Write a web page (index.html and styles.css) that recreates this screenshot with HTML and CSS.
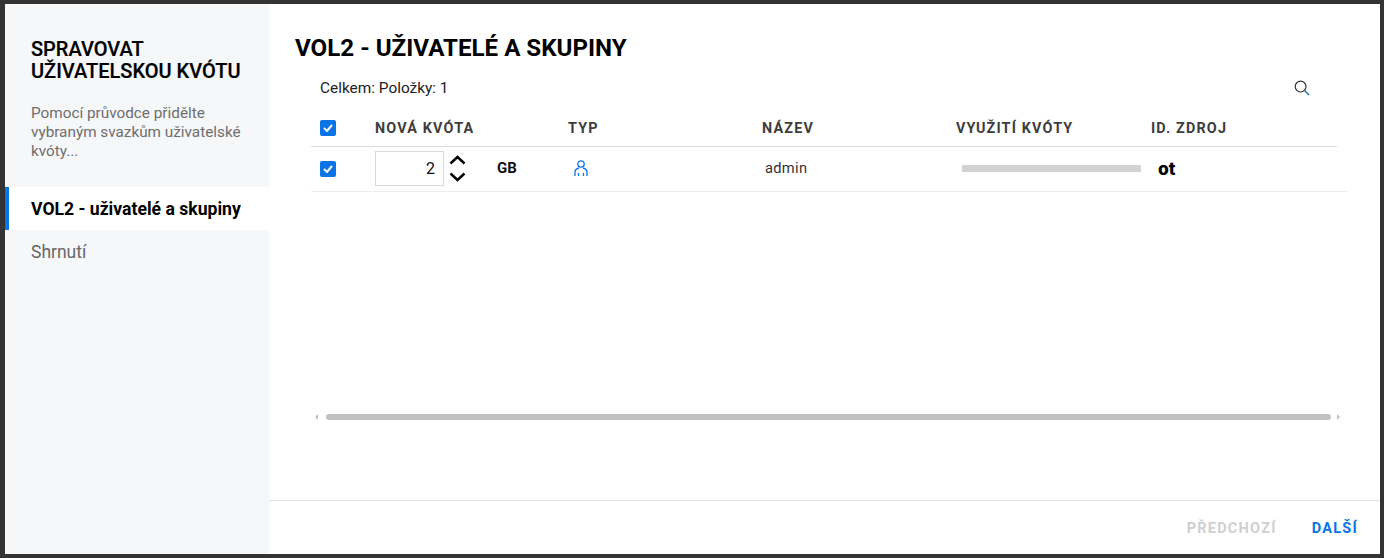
FILE: index.html
```html
<!DOCTYPE html>
<html lang="cs">
<head>
<meta charset="utf-8">
<title>Spravovat uživatelskou kvótu</title>
<link rel="stylesheet" href="styles.css">
</head>
<body>
<div class="modal">
  <aside class="side">
    <div class="side-head">
      <h2 class="side-title">SPRAVOVAT UŽIVATELSKOU KVÓTU</h2>
      <p class="side-desc">Pomocí průvodce přidělte vybraným svazkům uživatelské kvóty...</p>
    </div>
    <div class="step step-active">VOL2 - uživatelé a skupiny</div>
    <div class="step">Shrnutí</div>
  </aside>
  <main class="main">
    <div class="content">
      <h1 class="title">VOL2 - UŽIVATELÉ A SKUPINY</h1>
      <div class="toolbar">
        <span>Celkem: Položky: 1</span>
        <svg class="search" width="16" height="16" viewBox="0 0 16 16" fill="none" stroke="#333" stroke-width="1.2"><circle cx="6.6" cy="6.6" r="5.4"/><path d="M10.6 10.6 15 15" stroke="#1f6fb5" stroke-width="1.4"/></svg>
      </div>
      <div class="grid head">
        <div class="c-check"><span class="check"><svg width="10" height="8" viewBox="0 0 10 8" fill="none" stroke="#fff" stroke-width="2"><path d="M1 4l3 3 5-6"/></svg></span></div>
        <div class="th">NOVÁ KVÓTA</div>
        <div class="th">TYP</div>
        <div class="th">NÁZEV</div>
        <div class="th">VYUŽITÍ KVÓTY</div>
        <div class="th">ID. ZDROJ</div>
      </div>
      <div class="grid row">
        <div class="c-check row-check"><span class="check"><svg width="10" height="8" viewBox="0 0 10 8" fill="none" stroke="#fff" stroke-width="2"><path d="M1 4l3 3 5-6"/></svg></span></div>
        <div class="quota">
          <div class="input">2</div>
          <div class="spin">
            <svg width="17" height="10" viewBox="0 0 17 10" fill="none" stroke="#000" stroke-width="2.4"><path d="M1.500 8.500 8.500 2l7 6.500"/></svg>
            <svg width="17" height="10" viewBox="0 0 17 10" fill="none" stroke="#000" stroke-width="2.4"><path d="M1.500 1.500 8.500 8l7-6.500"/></svg>
          </div>
          <span class="unit">GB</span>
        </div>
        <div class="type"><svg width="14" height="17" viewBox="0 0 14 17" fill="none" stroke="#0f75e8" stroke-width="1.3"><circle cx="7" cy="4" r="3.200"/><path d="M1 16v-4C1 9.800 3 8.500 5 8M13 16v-4C13 9.800 11 8.500 9 8M4.500 16v-3M9.500 16v-3"/></svg></div>
        <div class="name">admin</div>
        <div class="usage"><div class="bar"></div></div>
        <div class="source">ot</div>
      </div>
      <div class="scroll">
        <span class="arrow arrow-left"></span>
        <div class="thumb"></div>
        <span class="arrow arrow-right"></span>
      </div>
    </div>
    <footer class="footer">
      <span class="btn btn-off">PŘEDCHOZÍ</span>
      <span class="btn btn-on">DALŠÍ</span>
    </footer>
  </main>
</div>
</body>
</html>
```
FILE: styles.css
```css
* { box-sizing: border-box; }
html, body { height: 100%; }
body {
  margin: 0;
  padding: 4px 4px 4px 5px;
  background: #333;
  font-family: Roboto, "Liberation Sans", sans-serif;
  overflow: hidden;
}
.modal { display: flex; height: 550px; background: #fff; }
.side { width: 264px; flex: none; background: #f6f7f9; }
.side-head { padding: 34px 24px 0 26px; height: 183px; }
.side-title { margin: 0; font-size: 20px; line-height: 22px; font-weight: 500; color: #000; -webkit-text-stroke: .2px #000; }
.side-desc { margin: 22px 0 0; font-size: 15.3px; line-height: 19px; color: #6e6e6e; }
.step { height: 43px; padding-left: 26px; font-size: 17.5px; line-height: 45px; color: #666; }
.step-active {
  padding-left: 22px;
  border-left: 4px solid #0a74e6;
  background: #fff;
  color: #000;
  font-weight: 700;
  font-size: 17.6px;
}
.main { flex: 1; min-width: 0; display: flex; flex-direction: column; }
.content { flex: 1; padding: 30px 32px 0 26px; }
.title { margin: 0; font-size: 24.15px; line-height: 28px; font-weight: 700; color: #000; }
.toolbar {
  display: flex;
  justify-content: space-between;
  align-items: center;
  height: 24px;
  margin: 14px 38px 0 25px;
  font-size: 15.4px;
  color: #222;
}
.grid {
  display: grid;
  grid-template-columns: 64px 193px 194px 194px 195px 1fr;
  margin-left: 16px;
  align-items: center;
}
.head { height: 38px; margin-top: 9px; margin-right: 11px; border-bottom: 1px solid #dcdcdc; }
.row { height: 45px; padding-bottom: 2px; border-bottom: 1px solid #eeeeee; }
.c-check { padding-left: 9px; display: flex; }
.row-check { padding-top: 1px; }
.check {
  width: 16px;
  height: 16px;
  display: flex;
  align-items: center;
  justify-content: center;
  background: #0a74e6;
  border-radius: 2px;
}
.th { padding-top: 1px; font-size: 14.4px; font-weight: 700; letter-spacing: 1.15px; color: #3d3d3d; }
.quota { display: flex; align-items: center; }
.input {
  width: 69px;
  height: 35px;
  padding-right: 8px;
  border: 1px solid #d9d9d9;
  text-align: right;
  font-size: 16px;
  line-height: 33px;
  color: #111;
}
.spin { display: flex; flex-direction: column; gap: 7px; margin-left: 5px; }
.spin svg { display: block; }
.unit { margin-left: 31px; font-size: 15px; font-weight: 700; color: #111; }
.type { display: flex; padding-left: 6px; }
.name { padding-left: 3px; font-size: 14.7px; letter-spacing: .3px; color: #333; }
.usage { padding-left: 6px; }
.bar { width: 179px; height: 7px; background: #d2d2d2; }
.source { padding-left: 7px; font-family: Inter, sans-serif; font-size: 17.5px; font-weight: 800; color: #000; }
.scroll { display: flex; align-items: center; height: 6px; margin: 222px 0 0 20px; }
.thumb { width: 1005px; height: 6px; margin: 0 6px 0 8px; border-radius: 3px; background: #c1c1c1; }
.arrow { width: 0; height: 0; border-top: 3px solid transparent; border-bottom: 3px solid transparent; }
.arrow-left { border-right: 3px solid #c1c1c1; }
.arrow-right { border-left: 3px solid #c1c1c1; }
.footer {
  height: 54px;
  display: flex;
  align-items: center;
  justify-content: flex-end;
  gap: 35px;
  padding: 2px 22px 0 0;
  border-top: 1px solid #dfdfdf;
}
.btn { font-size: 14.5px; font-weight: 700; letter-spacing: 1.25px; }
.btn-off { color: #cfcfcf; }
.btn-on { color: #0a74e6; }
```
